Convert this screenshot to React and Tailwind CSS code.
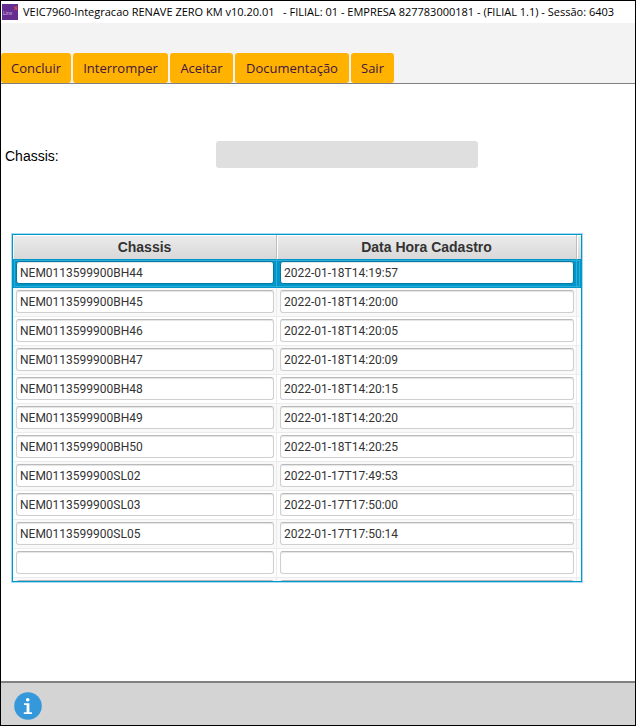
const tabs = [
  { label: 'Concluir', width: 'w-[70px]' },
  { label: 'Interromper', width: 'w-[95px]' },
  { label: 'Aceitar', width: 'w-[63px]' },
  { label: 'Documentação', width: 'w-[114px]' },
  { label: 'Sair', width: 'w-[43px]' },
];

const rows = [
  ['NEM0113599900BH44', '2022-01-18T14:19:57'],
  ['NEM0113599900BH45', '2022-01-18T14:20:00'],
  ['NEM0113599900BH46', '2022-01-18T14:20:05'],
  ['NEM0113599900BH47', '2022-01-18T14:20:09'],
  ['NEM0113599900BH48', '2022-01-18T14:20:15'],
  ['NEM0113599900BH49', '2022-01-18T14:20:20'],
  ['NEM0113599900BH50', '2022-01-18T14:20:25'],
  ['NEM0113599900SL02', '2022-01-17T17:49:53'],
  ['NEM0113599900SL03', '2022-01-17T17:50:00'],
  ['NEM0113599900SL05', '2022-01-17T17:50:14'],
  ['', ''],
  ['', ''],
];

function Logo() {
  return (
    <svg width="16" height="16" viewBox="0 0 16 16" aria-hidden="true" className="shrink-0">
      <rect width="16" height="16" fill="#662d91" />
      <text x="1" y="11" fontSize="5" fill="#d9b8e8" fontFamily="Liberation Sans, sans-serif">Linx</text>
      <path d="M12 3l2 .5L15.5 2M12.5 6l1.5-2.5L15 6" stroke="#e8524a" strokeWidth="1" fill="none" />
    </svg>
  );
}

function InfoIcon() {
  return (
    <svg width="28" height="28" viewBox="0 0 28 28" aria-hidden="true">
      <circle cx="14" cy="14" r="13.8" fill="#3498db" />
      <circle cx="13.7" cy="7.7" r="1.8" fill="#fff" />
      <path d="M10 11.3h5.4v8.9h2.6v1.7H9.8v-1.7h2.8v-7.1H10z" fill="#fff" />
    </svg>
  );
}

function Cell({ value, label, selected }) {
  return (
    <td
      className={`h-[29px] border-b border-r p-0 pl-[3px] pr-[2px] pt-[2px] align-top ${
        selected ? 'border-[#0096c9] border-r-[#2badd8]' : 'border-[#ececec]'
      }`}
    >
      <input
        type="text"
        aria-label={label}
        defaultValue={value}
        className={`block h-[23px] w-full rounded-[3px] border bg-white px-[3px] text-xs leading-4 text-[#333] shadow-[inset_0_1px_1px_#e4e4e4] outline-none ${
          selected ? 'border-[#0079a3]' : 'border-[#cfcfcf] border-t-[#b9b9b9]'
        }`}
      />
    </td>
  );
}

export default function App() {
  return (
    <div className="flex min-h-screen flex-col overflow-hidden border border-black bg-white font-[Roboto,'Open_Sans',sans-serif] text-black">
      <header className="font-['Open_Sans','Noto_Sans',sans-serif]">
        <div className="flex h-[22px] items-center gap-[5px] pl-px">
          <Logo />
          <h1 className="whitespace-pre text-[11px] leading-4">
            {'VEIC7960-Integracao RENAVE ZERO KM v10.20.01   - FILIAL: 01 - EMPRESA 827783000181 - (FILIAL 1.1) - Sessão: 6403'}
          </h1>
        </div>
        <nav className="flex h-[61px] items-end gap-[2px] border-b border-[#808080] bg-[#f3f3f3]">
          {tabs.map((tab) => (
            <button
              key={tab.label}
              type="button"
              className={`h-[30px] rounded-[3px] bg-[#ffb200] text-[13px] leading-5 text-[#411540] ${tab.width}`}
            >
              {tab.label}
            </button>
          ))}
        </nav>
      </header>

      <main className="flex-1">
        <div className="flex items-center pl-1 pt-[57px] font-['Liberation_Sans',Arial,sans-serif]">
          <label htmlFor="chassis" className="w-[211px] pt-[3px] text-sm leading-5">
            Chassis:
          </label>
          <input id="chassis" type="text" disabled className="h-[27px] w-[262px] rounded-[3px] bg-[#dfdfdf] px-2 text-sm" />
        </div>

        <div className="ml-[11px] mr-[53px] mt-[66px] h-[348px] overflow-hidden border border-[#0096c9] shadow-[0_0_0_1px_#a6dcee]">
          <table className="w-full table-fixed border-separate border-spacing-0">
            <colgroup>
              <col className="w-[264px]" />
              <col />
              <col className="w-1" />
            </colgroup>
            <thead className="font-['Liberation_Sans',Arial,sans-serif] text-sm leading-5 text-[#333]">
              <tr className="bg-linear-to-b from-[#ececec] to-[#d8d8d8]">
                <th className="h-6 border-r border-[#bdbdbd] p-0 font-bold shadow-[inset_1px_1px_0_#fff]">Chassis</th>
                <th className="h-6 border-r border-[#bdbdbd] p-0 font-bold shadow-[inset_1px_1px_0_#fff]">Data Hora Cadastro</th>
                <td className="p-0 shadow-[inset_1px_1px_0_#fff]" />
              </tr>
            </thead>
            <tbody>
              {rows.map(([chassis, date], i) => (
                <tr
                  key={i}
                  className={
                    i === 0
                      ? 'bg-[#0096c9] shadow-[inset_0_0_0_1px_#0096c9,inset_0_0_0_2px_#2badd8]'
                      : i % 2
                        ? 'bg-[#f9f9f9]'
                        : 'bg-white'
                  }
                >
                  <Cell value={chassis} label={`Chassis ${i + 1}`} selected={i === 0} />
                  <Cell value={date} label={`Data Hora Cadastro ${i + 1}`} selected={i === 0} />
                  <td className={`border-b p-0 ${i === 0 ? 'border-[#0096c9]' : 'border-[#ececec]'}`} />
                </tr>
              ))}
            </tbody>
          </table>
        </div>
      </main>

      <footer className="flex h-[44px] items-center border-t-2 border-[#808080] bg-[#d4d4d4] pl-[13px] pt-1">
        <button type="button" aria-label="Informações">
          <InfoIcon />
        </button>
      </footer>
    </div>
  );
}
